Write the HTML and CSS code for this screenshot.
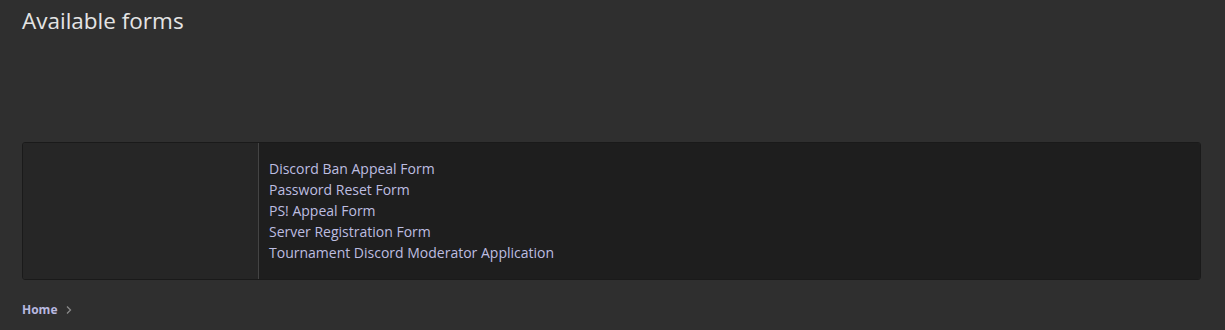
FILE: index.html
```html
<!DOCTYPE html>
<html lang="en">
  <head>
    <meta charset="UTF-8" />
    <meta name="viewport" content="width=device-width, initial-scale=1.0" />
    <title>Available forms</title>
    <link rel="stylesheet" href="styles.css">
  </head>
  <body>
    <div class="page">
      <h1 class="page-title">Available forms</h1>

      <div class="form-block">
        <div class="form-side"></div>
        <ul class="form-list">
          <li><a href="#">Discord Ban Appeal Form</a></li>
          <li><a href="#">Password Reset Form</a></li>
          <li><a href="#">PS! Appeal Form</a></li>
          <li><a href="#">Server Registration Form</a></li>
          <li><a href="#">Tournament Discord Moderator Application</a></li>
        </ul>
      </div>

      <div class="breadcrumb">
        <a href="#" class="crumb">Home</a>
        <span class="crumb-sep">
          <svg width="8" height="10" viewBox="0 0 8 10">
            <path d="M2 1.5 L5.5 5 L2 8.5" fill="none" stroke="#8a8a8a" stroke-width="1.3" />
          </svg>
        </span>
      </div>
    </div>
  </body>
</html>
```

FILE: styles.css
```css
body {
  margin: 0;
  background-color: #2f2f2f;
  color: #e6e6e6;
  font-family: "Open Sans", "Noto Sans", sans-serif;
}
.page {
  padding: 5px 24px 0 22px;
}
.page-title {
  margin: 0;
  font-size: 22.5px;
  font-weight: 400;
  color: #e4e4e4;
  line-height: 32px;
}

.form-block {
  display: flex;
  margin-top: 105px;
  height: 136px;
  border: 1px solid #1a1a1a;
  border-radius: 3px;
  overflow: hidden;
}
.form-side {
  width: 235px;
  background-color: #262626;
  border-right: 1px solid #444;
}
.form-list {
  flex: 1;
  margin: 0;
  padding: 15px 10px;
  list-style: none;
  background-color: #1e1e1e;
}
.form-list li {
  font-size: 14px;
  line-height: 21px;
}
.form-list a {
  color: #bdbde0;
  text-decoration: none;
}

.breadcrumb {
  display: flex;
  align-items: center;
  gap: 8px;
  margin-top: 21px;
}
.breadcrumb .crumb {
  color: #b9b9e0;
  font-size: 12px;
  font-weight: 700;
  text-decoration: none;
}
.crumb-sep {
  display: flex;
}
```
